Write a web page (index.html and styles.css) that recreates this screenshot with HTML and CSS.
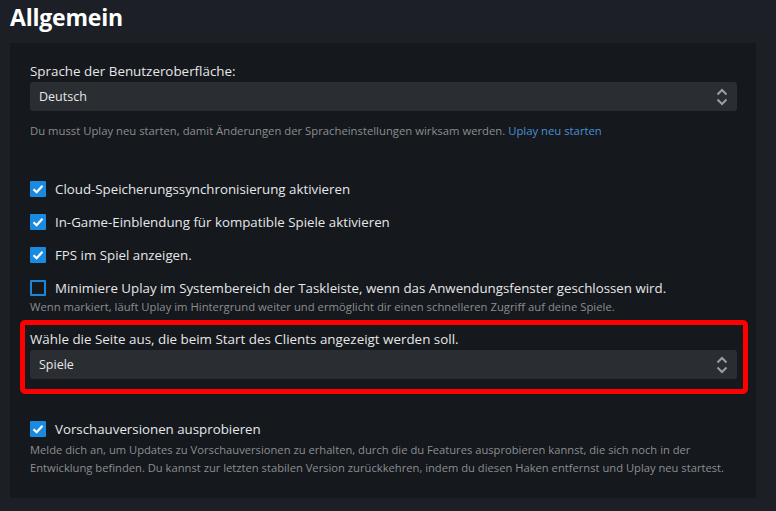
FILE: index.html
```html
<!DOCTYPE html>
<html lang="de">
<head>
<meta charset="utf-8">
<title>Allgemein</title>
<link rel="stylesheet" href="styles.css">
</head>
<body>
<h1 class="title">Allgemein</h1>
<section class="panel">
  <div class="field">
    <label class="field-label">Sprache der Benutzeroberfläche:</label>
    <div class="select">
      <span>Deutsch</span>
      <svg class="chevrons" width="12" height="20" viewBox="0 0 12 20"><path d="M1.5 7.5 L6 3 L10.5 7.5 M1.5 12.5 L6 17 L10.5 12.5" fill="none" stroke="#9b9ea3" stroke-width="2"/></svg>
    </div>
    <p class="hint">Du musst Uplay neu starten, damit Änderungen der Spracheinstellungen wirksam werden. <a class="link">Uplay neu starten</a></p>
  </div>

  <ul class="checks">
    <li class="check"><span class="box on"><svg width="16" height="16" viewBox="0 0 16 16"><path d="M3.5 8.2 L6.6 11.2 L12.5 4.8" fill="none" stroke="#fff" stroke-width="2.2"/></svg></span>Cloud-Speicherungssynchronisierung aktivieren</li>
    <li class="check"><span class="box on"><svg width="16" height="16" viewBox="0 0 16 16"><path d="M3.5 8.2 L6.6 11.2 L12.5 4.8" fill="none" stroke="#fff" stroke-width="2.2"/></svg></span>In-Game-Einblendung für kompatible Spiele aktivieren</li>
    <li class="check"><span class="box on"><svg width="16" height="16" viewBox="0 0 16 16"><path d="M3.5 8.2 L6.6 11.2 L12.5 4.8" fill="none" stroke="#fff" stroke-width="2.2"/></svg></span>FPS im Spiel anzeigen.</li>
    <li class="check"><span class="box"></span>Minimiere Uplay im Systembereich der Taskleiste, wenn das Anwendungsfenster geschlossen wird.</li>
  </ul>
  <p class="hint sub">Wenn markiert, läuft Uplay im Hintergrund weiter und ermöglicht dir einen schnelleren Zugriff auf deine Spiele.</p>

  <div class="field marked">
    <label class="field-label">Wähle die Seite aus, die beim Start des Clients angezeigt werden soll.</label>
    <div class="select">
      <span>Spiele</span>
      <svg class="chevrons" width="12" height="20" viewBox="0 0 12 20"><path d="M1.5 7.5 L6 3 L10.5 7.5 M1.5 12.5 L6 17 L10.5 12.5" fill="none" stroke="#9b9ea3" stroke-width="2"/></svg>
    </div>
  </div>

  <ul class="checks last">
    <li class="check"><span class="box on"><svg width="16" height="16" viewBox="0 0 16 16"><path d="M3.5 8.2 L6.6 11.2 L12.5 4.8" fill="none" stroke="#fff" stroke-width="2.2"/></svg></span>Vorschauversionen ausprobieren</li>
  </ul>
  <p class="hint sub long">Melde dich an, um Updates zu Vorschauversionen zu erhalten, durch die du Features ausprobieren kannst, die sich noch in der Entwicklung befinden. Du kannst zur letzten stabilen Version zurückkehren, indem du diesen Haken entfernst und Uplay neu startest.</p>
</section>
</body>
</html>
```
FILE: styles.css
```css
html, body {
  margin: 0;
  padding: 0;
  background: #1c1f26;
  height: 100%;
}

body {
  font-family: "Open Sans", "Noto Sans", sans-serif;
  color: #e6e7e9;
  overflow: hidden;
}

.title {
  margin: 0;
  padding: 0 10px;
  height: 43px;
  line-height: 34px;
  font-size: 23px;
  font-weight: 700;
  color: #ffffff;
  letter-spacing: -0.2px;
}

.panel {
  margin: 0 20px 0 10px;
  padding: 18px 19px 21px 20px;
  background: #15181c;
}

.field-label {
  display: block;
  font-size: 13.4px;
  line-height: 20px;
  color: #e6e7e9;
  margin-bottom: 1px;
}

.select {
  display: flex;
  align-items: center;
  justify-content: space-between;
  height: 29px;
  padding: 0 9px;
  background: #2a2d31;
  border-radius: 3px;
  font-size: 12.5px;
  color: #e6e7e9;
}

.chevrons {
  display: block;
}

.hint {
  margin: 0;
  font-size: 11.3px;
  line-height: 18px;
  color: #8b8e93;
}

.field > .hint {
  margin-top: 11px;
}

.link {
  color: #4a90d6;
}

.checks {
  list-style: none;
  margin: 39px 0 0;
  padding: 0;
  display: flex;
  flex-direction: column;
  gap: 13px;
}

.check {
  display: flex;
  align-items: center;
  gap: 9px;
  height: 20px;
  line-height: 20px;
  font-size: 13.3px;
  color: #e6e7e9;
}

.box {
  flex: none;
  width: 16px;
  height: 16px;
  box-sizing: border-box;
  border: 2px solid #1a87d9;
  border-radius: 1px;
}

.box.on {
  border: none;
  background: #1a89e0;
}

.box svg {
  display: block;
}

.hint.sub {
  margin-top: 0;
}

.marked {
  margin: 4px -11px 0 -10px;
  padding: 4px 6px 10px 5px;
  border: 5px solid #ff0000;
  border-radius: 5px;
}

.checks.last {
  margin-top: 25px;
}

.hint.long {
  margin-top: 2px;
  font-size: 11.2px;
}
```
